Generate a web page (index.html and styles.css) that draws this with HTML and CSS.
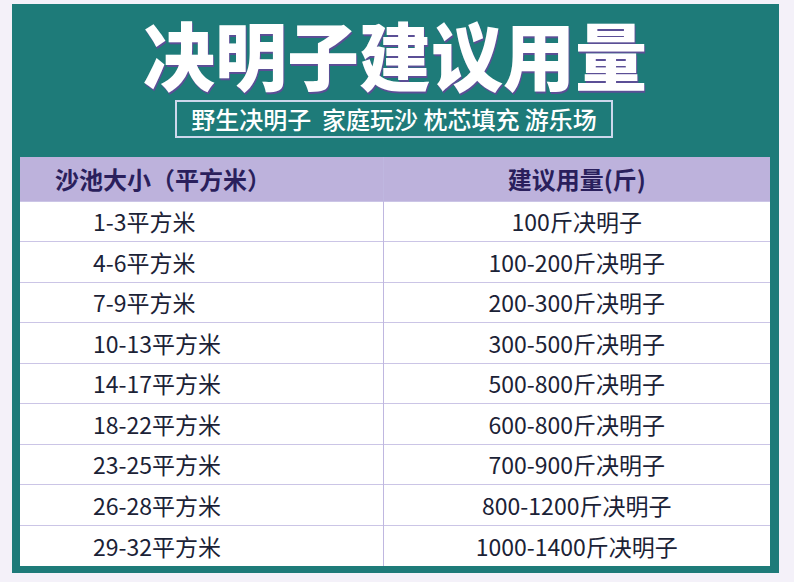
FILE: index.html
```html
<!DOCTYPE html>
<html lang="zh">
<head>
<meta charset="utf-8">
<link rel="stylesheet" href="styles.css">
</head>
<body>
<div class="panel">
  <h1 class="title">决明子建议用量</h1>
  <div class="tag-wrap"><div class="tag">野生决明子&nbsp;&nbsp;家庭玩沙 枕芯填充 游乐场</div></div>
  <table class="usage">
    <thead>
      <tr><th class="c1">沙池大小（平方米）</th><th class="c2">建议用量(斤)</th></tr>
    </thead>
    <tbody>
      <tr><td class="c1">1-3平方米</td><td class="c2">100斤决明子</td></tr>
      <tr><td class="c1">4-6平方米</td><td class="c2">100-200斤决明子</td></tr>
      <tr><td class="c1">7-9平方米</td><td class="c2">200-300斤决明子</td></tr>
      <tr><td class="c1">10-13平方米</td><td class="c2">300-500斤决明子</td></tr>
      <tr><td class="c1">14-17平方米</td><td class="c2">500-800斤决明子</td></tr>
      <tr><td class="c1">18-22平方米</td><td class="c2">600-800斤决明子</td></tr>
      <tr><td class="c1">23-25平方米</td><td class="c2">700-900斤决明子</td></tr>
      <tr><td class="c1">26-28平方米</td><td class="c2">800-1200斤决明子</td></tr>
      <tr><td class="c1">29-32平方米</td><td class="c2">1000-1400斤决明子</td></tr>
    </tbody>
  </table>
</div>
</body>
</html>
```

FILE: styles.css
```css
* { box-sizing: border-box; }
html, body { margin: 0; padding: 0; }
body {
  width: 794px;
  height: 582px;
  background: #f4f1f9;
  font-family: "Noto Sans CJK SC", "Noto Sans", sans-serif;
  overflow: hidden;
}
.panel {
  margin: 4px 0 0 12px;
  width: 767px;
  height: 569px;
  background: #1e7b79;
  padding: 10px 9px 0 8px;
}
.title {
  margin: 0;
  line-height: 78px;
  font-size: 72px;
  font-weight: 900;
  color: #ffffff;
  text-align: center;
  letter-spacing: 0;
  text-shadow: 1px 2px 0 #5b4f96;
  transform: scaleY(1.03);
}
.tag-wrap {
  display: flex;
  justify-content: center;
  margin-top: 8px;
  padding-right: 2px;
}
.tag {
  height: 38px;
  line-height: 34px;
  border: 2px solid #cdd8ec;
  padding: 0 14px;
  color: #ffffff;
  font-size: 24px;
  font-weight: 500;
  white-space: nowrap;
}
.usage {
  margin-top: 19px;
  width: 750px;
  border-collapse: collapse;
  background: #ffffff;
  table-layout: fixed;
}
.usage th, .usage td {
  padding: 0;
  white-space: nowrap;
}
.usage th {
  height: 44px;
  background: #bdb2dc;
  color: #2a1f5c;
  font-size: 24px;
  font-weight: 700;
}
.usage td {
  height: 40.5px;
  font-size: 23px;
  font-weight: 400;
  color: #1b2236;
  border-top: 1px solid #cbc5e6;
}
.usage .c1 {
  width: 363px;
  border-right: 1px solid #bfb7e0;
}
.usage th.c1 { text-align: left; padding-left: 35px; }
.usage td.c1 { text-align: left; padding-left: 73px; }
.usage .c2 { text-align: center; }
```
